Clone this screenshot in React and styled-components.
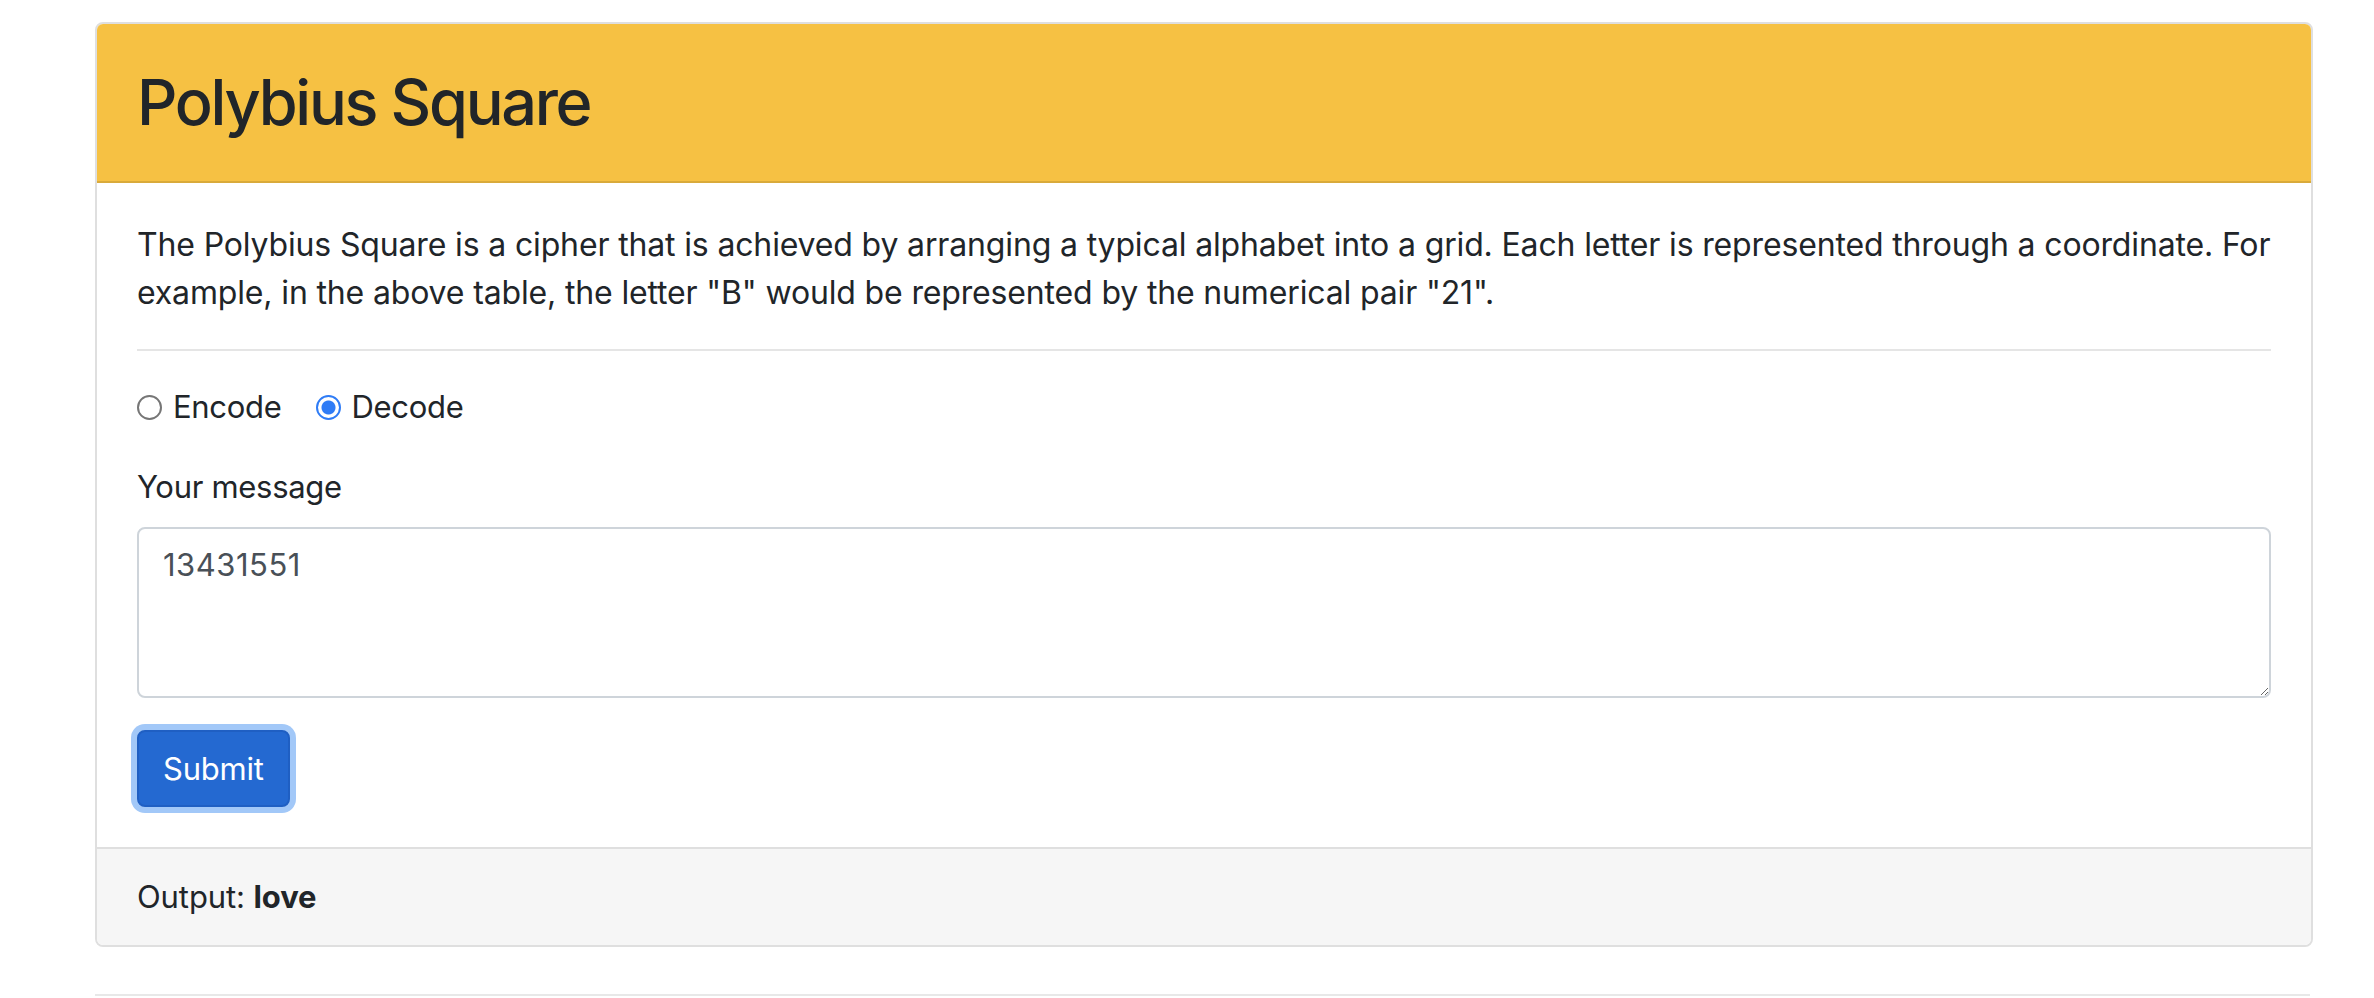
import React, { useState } from 'react'
import styled, { createGlobalStyle } from 'styled-components'

const GlobalStyle = createGlobalStyle`
  html, body {
    margin: 0;
    padding: 0;
    background: #ffffff;
  }
  body {
    font-family: Inter, "Noto Sans", "Liberation Sans", sans-serif;
    font-size: 31px;
    line-height: 48px;
    color: #212529;
  }
  * {
    box-sizing: border-box;
  }
`

const Page = styled.div`
  padding: 22px 61px 0 95px;
`

const Card = styled.section`
  display: flex;
  flex-direction: column;
  border: 2px solid #dfdfdf;
  border-radius: 8px;
  overflow: hidden;
  background: #ffffff;
`

const CardHeader = styled.header`
  padding: 40px 40px;
  background: #f6c143;
  border-bottom: 2px solid #d9aa3b;
`

const Title = styled.h2`
  margin: 0;
  font-size: 63px;
  line-height: 77px;
  font-weight: 500;
  letter-spacing: -2.3px;
`

const CardBody = styled.div`
  padding: 38px 40px 40px;
`

const Intro = styled.p`
  margin: 0 0 32px;
  font-size: 32px;
  letter-spacing: -0.15px;
`

const Rule = styled.hr`
  margin: 0 0 32px;
  border: 0;
  border-top: 2px solid #e5e5e5;
`

const ModeRow = styled.div`
  display: flex;
  align-items: center;
  height: 48px;
  margin-bottom: 32px;
`

const RadioLabel = styled.label`
  display: inline-flex;
  align-items: center;
  margin-right: 34px;
  cursor: pointer;
  letter-spacing: -0.3px;
`

const RadioInput = styled.input`
  appearance: none;
  width: 25px;
  height: 25px;
  margin: 0 11px 0 0;
  border-radius: 50%;
  border: 2px solid ${p => (p.checked ? '#2f7cf6' : '#767676')};
  background: ${p =>
    p.checked
      ? 'radial-gradient(circle, #2f7cf6 0 6.5px, #ffffff 7.5px)'
      : '#ffffff'};
  cursor: pointer;
`

const FieldLabel = styled.label`
  display: block;
  margin-bottom: 16px;
  letter-spacing: -0.3px;
`

const Message = styled.textarea`
  display: block;
  width: 100%;
  height: 171px;
  margin-bottom: 32px;
  padding: 12px 24px;
  font-family: inherit;
  font-size: 31px;
  line-height: 48px;
  letter-spacing: 0.5px;
  color: #495057;
  border: 2px solid #ced4da;
  border-radius: 8px;
  outline: none;
  resize: vertical;
`

const SubmitButton = styled.button`
  display: block;
  height: 77px;
  padding: 12px 24px;
  font-family: inherit;
  font-size: 31px;
  line-height: 48px;
  color: #ffffff;
  background: #2469d1;
  border: 2px solid #1f5fc3;
  border-radius: 8px;
  box-shadow: 0 0 0 6px #a2c8f8;
  cursor: pointer;
  letter-spacing: -0.2px;
`

const CardFooter = styled.footer`
  padding: 24px 40px;
  background: #f6f6f6;
  border-top: 2px solid #dfdfdf;
  letter-spacing: -0.1px;
`

const Result = styled.strong`
  font-weight: 700;
`

const BottomRule = styled.hr`
  margin: 47px 3px 0 0;
  border: 0;
  border-top: 2px solid #e8e8e8;
`

const App = () => {
  const [mode, setMode] = useState('decode')
  const [message, setMessage] = useState('13431551')

  return (
    <>
      <GlobalStyle />
      <Page>
        <Card>
          <CardHeader>
            <Title>Polybius Square</Title>
          </CardHeader>
          <CardBody>
            <Intro>
              The Polybius Square is a cipher that is achieved by arranging a
              typical alphabet into a grid. Each letter is represented through a
              coordinate. For example, in the above table, the letter "B" would
              be represented by the numerical pair "21".
            </Intro>
            <Rule />
            <ModeRow>
              <RadioLabel>
                <RadioInput
                  type="radio"
                  name="mode"
                  checked={mode === 'encode'}
                  onChange={() => setMode('encode')}
                />
                Encode
              </RadioLabel>
              <RadioLabel>
                <RadioInput
                  type="radio"
                  name="mode"
                  checked={mode === 'decode'}
                  onChange={() => setMode('decode')}
                />
                Decode
              </RadioLabel>
            </ModeRow>
            <FieldLabel htmlFor="message">Your message</FieldLabel>
            <Message
              id="message"
              rows={3}
              value={message}
              onChange={e => setMessage(e.target.value)}
            />
            <SubmitButton type="button">Submit</SubmitButton>
          </CardBody>
          <CardFooter>
            Output: <Result>love</Result>
          </CardFooter>
        </Card>
        <BottomRule />
      </Page>
    </>
  )
}

export default App
